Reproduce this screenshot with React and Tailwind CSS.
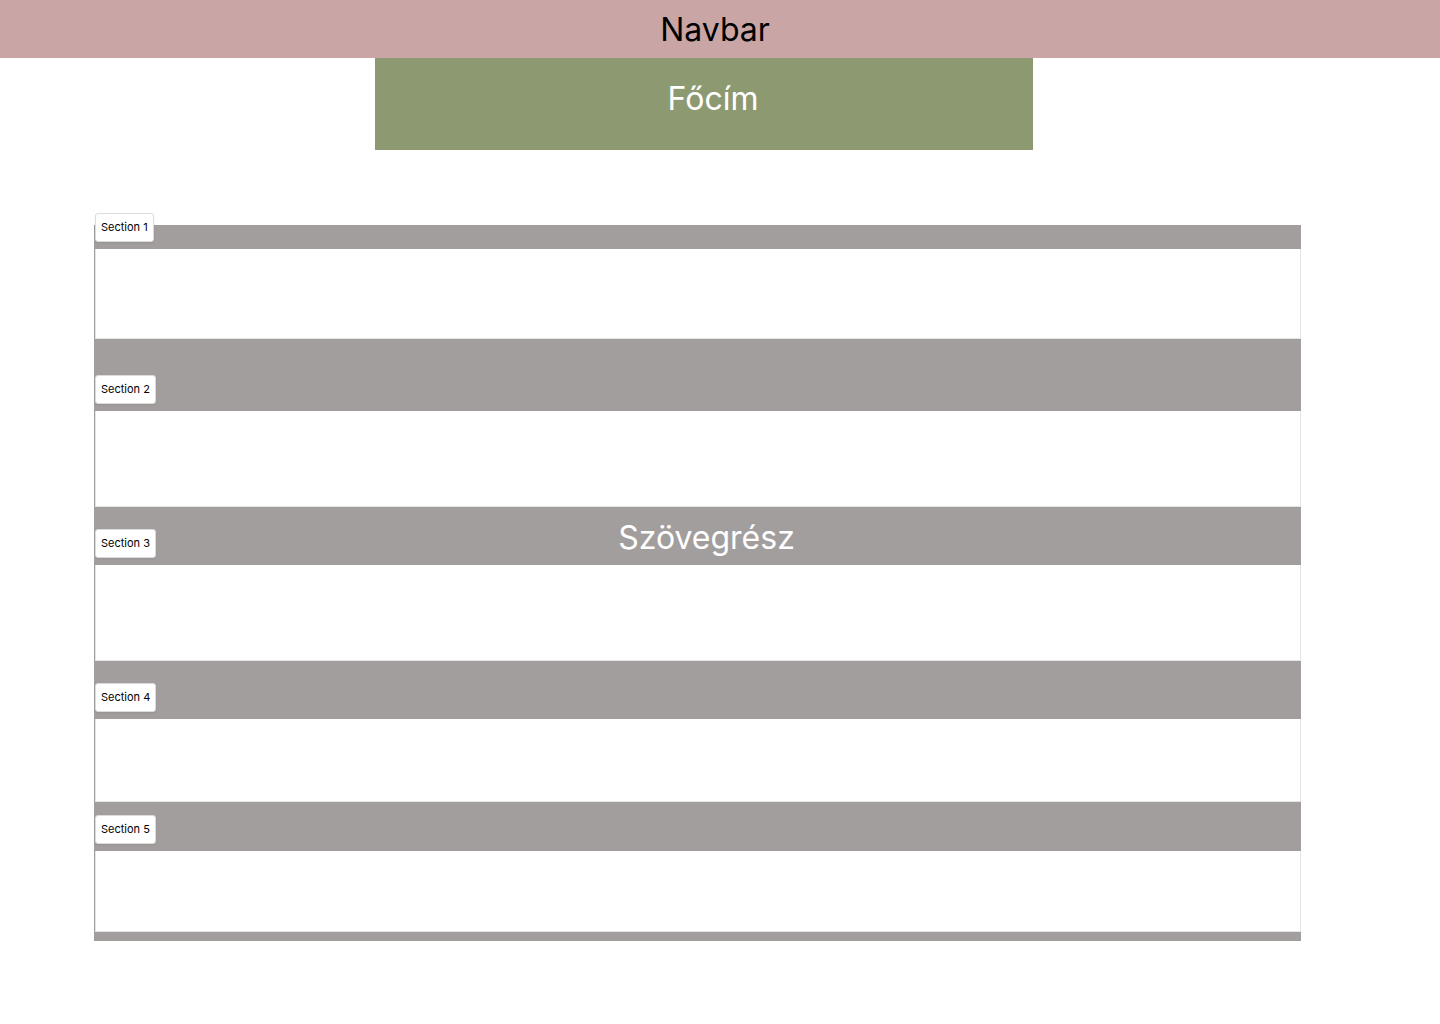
export default function App() {
  const sections = [
    { gap: 24, h: 90, label: "Section 1" },
    { gap: 72, h: 96, label: "Section 2" },
    { gap: 58, h: 96, label: "Section 3", text: true },
    { gap: 58, h: 83, label: "Section 4" },
    { gap: 49, h: 81, label: "Section 5" },
  ];
  return (
    <div className="min-h-[1024px] bg-white font-['Inter','Liberation_Sans',sans-serif]">
      <nav className="h-[58px] bg-[#c9a5a5] flex items-center justify-center text-[32px] text-black pt-[1px] pr-[10px]">
        Navbar
      </nav>
      <div className="ml-[375px] w-[658px] h-[92px] bg-[#8d9971] flex justify-center items-start pt-[17px] pl-[18px] text-[32px] text-white">
        Főcím
      </div>
      <div className="mt-[75px] ml-[94px] w-[1207px] bg-[#a29e9d] pl-[1px] pb-[9px]">
        {sections.map((s) => (
          <div key={s.label}>
            {s.text ? (
              <div className="h-[58px] flex items-center justify-center pt-[4px] pl-[17px] text-[32px] text-white">
                Szövegrész
              </div>
            ) : s.gap === 24 ? (
              <div className="h-[24px]" />
            ) : s.gap === 72 ? (
              <div className="h-[72px]" />
            ) : s.gap === 58 ? (
              <div className="h-[58px]" />
            ) : (
              <div className="h-[49px]" />
            )}
            <div
              className={
                "relative bg-white border border-t-0 border-[#e4e4e4] " +
                (s.h === 90
                  ? "h-[90px]"
                  : s.h === 96
                  ? "h-[96px]"
                  : s.h === 83
                  ? "h-[83px]"
                  : "h-[81px]")
              }
            >
              <div className="absolute -top-[36px] -left-[1px] h-[29px] px-[5px] flex items-center bg-white border border-[#dcdcdc] rounded-[3px] shadow-[0_1px_2px_rgba(0,0,0,0.08)] text-[11px] text-black whitespace-nowrap">
                {s.label}
              </div>
            </div>
          </div>
        ))}
      </div>
    </div>
  );
}
